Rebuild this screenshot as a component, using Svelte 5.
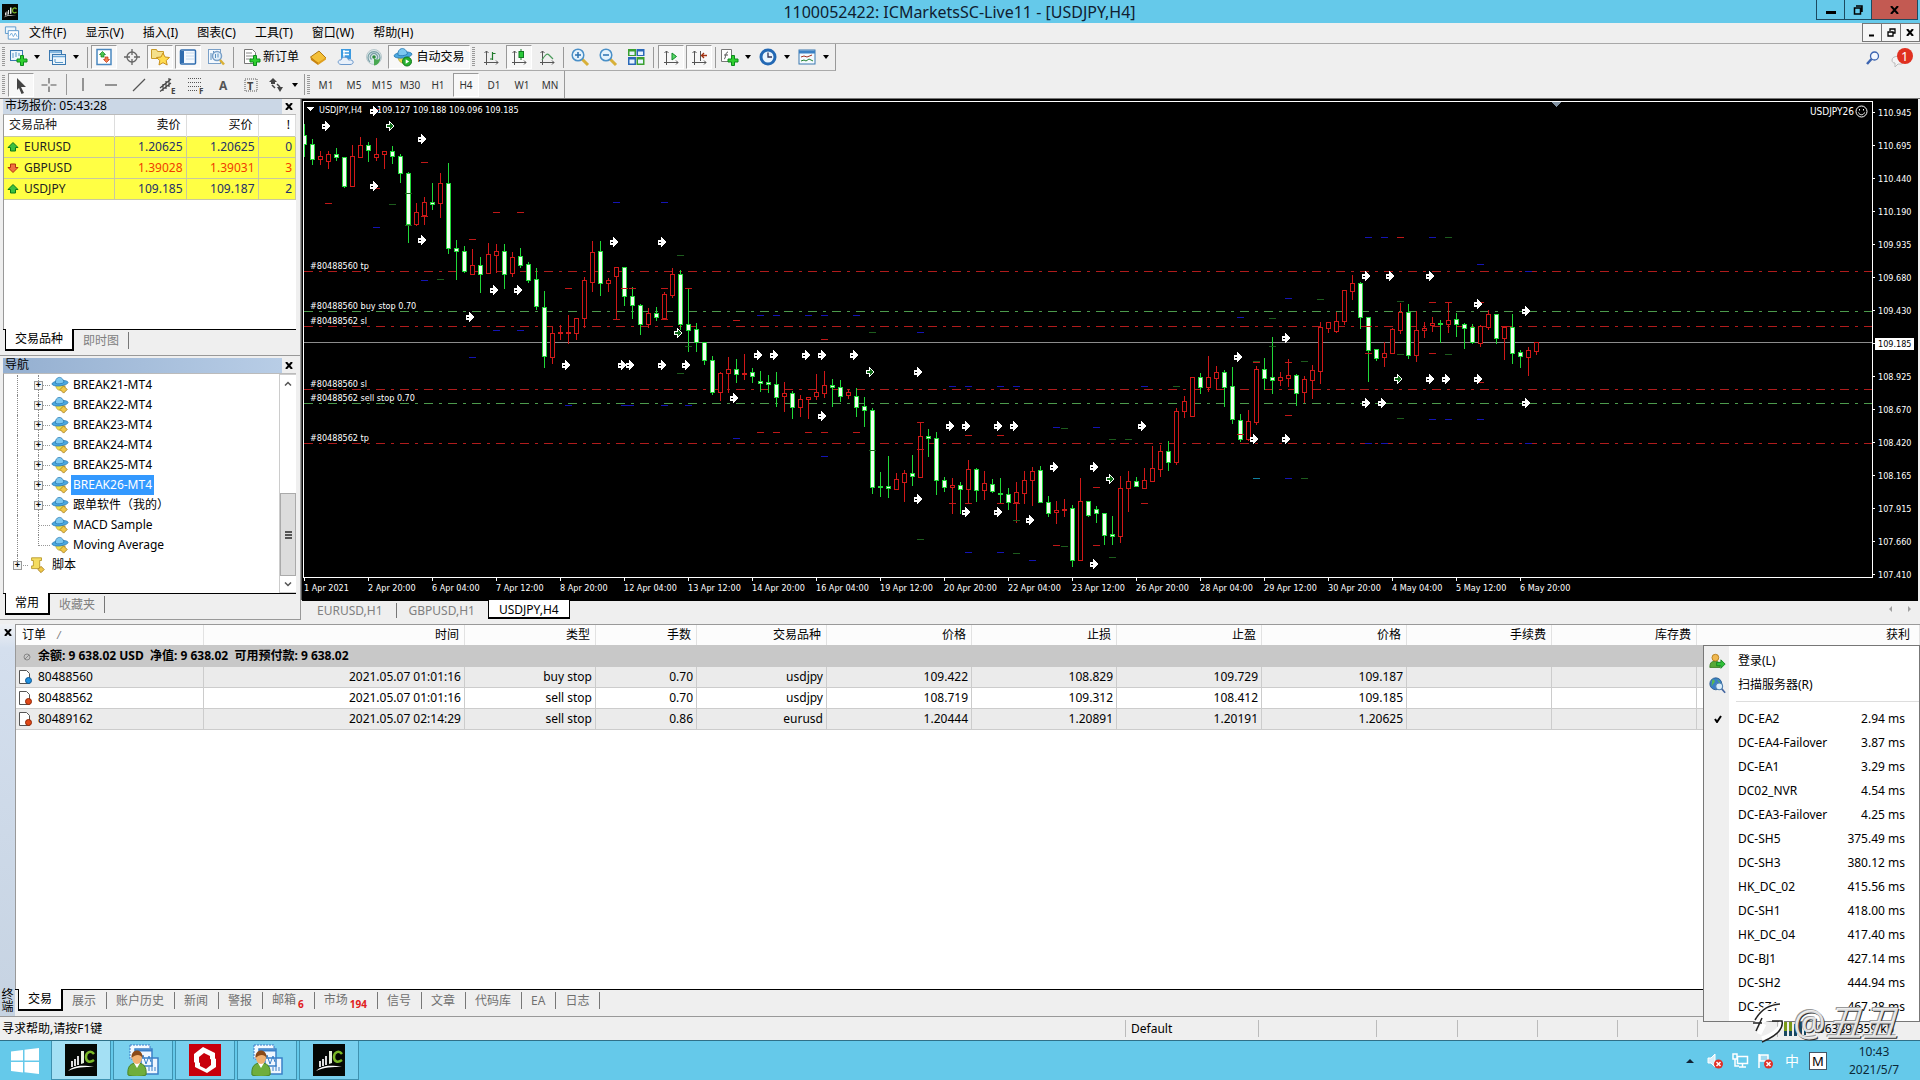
<script>
  // candle: kind, high, body top, body bottom, low (chart canvas units)
  const candleData = `g124,135,144,156 g139,144,159,164 r151,156,159,164 r151,154,161,168 g148,154,157,160 g157,157,186,187 r145,156,186,186 r137,145,157,157 g142,145,150,161 r138,154,157,160
r151,151,154,168 g146,151,156,163 g154,156,173,182 g172,173,224,242 r203,212,224,225 r197,202,215,224 g183,202,204,209 r173,183,203,217 g163,183,248,253 g240,248,251,279
g246,251,271,272 r249,265,274,274 g257,265,274,292 r243,254,273,273 r244,251,255,272 g244,251,274,288 r252,257,273,276 g248,256,265,267 g262,264,280,282 g268,279,306,309
g291,307,356,367 r327,333,357,363 r325,332,333,339 r315,332,333,343 r318,318,333,339 r277,280,318,327 r241,252,282,291 g241,251,283,295 r278,280,283,291 r267,267,276,319
g267,267,296,305 g287,296,305,318 g304,305,324,334 r308,313,324,327 g307,313,317,320 r292,294,318,319 r268,274,295,297 g270,274,324,329 g288,324,330,351 g323,329,342,351
g342,342,360,364 g356,360,392,394 r372,373,392,400 r357,369,373,392 g359,369,374,382 r354,373,374,379 g368,372,376,382 g371,381,383,391 g375,382,384,392 g372,384,397,406
r382,393,396,411 g391,393,407,418 r395,399,407,416 r397,397,399,418 r374,392,396,399 r371,385,393,397 g379,385,387,406 g380,387,396,401 r389,392,395,398 g388,396,407,416
g397,406,410,426 g408,410,487,493 g472,486,487,496 g456,486,488,497 r473,479,489,489 r470,473,482,501 g455,473,476,485 r422,436,477,477 g429,436,438,456 g432,438,480,494
g477,480,487,491 r478,485,487,513 g482,485,489,513 r460,469,489,503 g468,469,490,501 r471,483,490,499 g479,484,491,492 g478,493,494,503 g488,494,502,509 r482,492,502,522
r471,480,493,503 r467,471,480,505 g466,470,502,502 g496,502,513,516 r501,510,512,523 r499,509,510,516 g505,508,560,566 r478,501,560,560 g501,501,515,516 g506,509,513,522
g513,513,535,544 g516,534,536,544 r476,488,536,542 r471,481,488,511 g477,481,486,486 r468,480,488,488 r446,468,481,481 r445,451,469,476 g441,451,462,470 r408,411,462,464
r396,401,411,417 r377,377,416,416 g373,377,387,393 r356,377,387,391 r366,372,378,389 g370,372,387,406 g367,386,419,423 g414,420,439,441 r410,421,439,440 r366,369,422,424
g358,369,378,389 g337,377,380,393 r372,377,380,385 r359,375,378,386 g374,375,393,405 r376,379,392,402 r365,370,380,398 r322,327,371,383 r322,322,328,332 r312,321,331,332
r290,290,321,324 r275,283,291,299 g282,283,317,328 g317,317,350,381 g349,349,358,360 r342,353,357,366 r328,329,353,353 r303,312,330,333 g304,312,355,358 r311,330,355,361
r322,328,330,337 r317,323,325,331 g320,323,324,342 r302,320,324,332 g313,319,324,336 g323,324,328,348 g324,327,342,343 r325,326,343,346 r310,314,327,329 g314,314,338,343
r327,327,338,359 g314,327,353,363 g350,352,356,367 r347,350,357,375 r342,342,351,354`;
  const candles = candleData.trim().split(/\s+/).map((s, i) => {
    const [h, t, b, l] = s.slice(1).split(',').map(Number);
    return { up: s[0] === 'g', x: 304 + i * 8, h, t, b: Math.max(b, t + 1), l };
  });

  const pts = (s) => s.trim().split(' ').map((p) => p.split(',').map(Number));
  const whiteMarks = pts('326,126 374,111 422,139 374,186 422,240 614,242 662,242 494,290 518,290 470,317 566,365 622,365 630,365 662,365 686,365 734,398 758,355 774,355 806,355 822,355 854,355 918,372 822,416 918,499 950,426 966,426 998,426 1014,426 966,512 998,512 1030,520 1054,467 1094,467 1094,564 1142,426 1238,357 1286,338 1254,439 1286,439 1366,276 1390,276 1430,276 1478,304 1526,311 1430,379 1446,379 1478,379 1366,403 1382,403 1526,403');
  const greenMarks = pts('390,126 678,333 870,372 1110,479 1398,379');
  const ticks = [
    { c: '#c01818', p: pts('376,109 424,162 328,203 496,212 520,212 472,239 568,288 624,288 632,288 664,288 688,288 376,188 616,319 664,319 424,216 736,320 824,339 760,432 776,432 808,432 824,432 856,432 920,422 920,449 968,435 1000,435 952,503 968,503 1000,503 1016,503 1056,545 1096,545 1096,487 1144,503 1256,362 1288,362 1240,434 1288,415 1432,302 1448,302 1480,302 1368,353 1432,353 1480,382 1400,237 1368,326 1504,326') },
    { c: '#1414b4', p: pts('376,227 424,280 616,202 664,202 496,330 520,330 472,357 568,405 624,405 630,405 664,405 688,405 760,315 776,315 808,315 824,315 856,315 920,332 736,438 824,456 952,386 968,386 1000,386 1016,386 1056,427 1096,427 968,552 1000,552 1032,560 1144,386 1240,317 1288,298 1288,478 1368,237 1384,237 1432,237 1480,264 1528,271 1432,419 1448,419 1480,419 1368,443 1384,443 1528,443') },
    { c: '#1d5c1d', p: pts('392,204 440,279 680,255 680,373 408,193 408,225 688,346 872,332 872,450 920,539 1064,428 1112,439 1016,520 1016,553 1064,546 1112,557 1128,439 1176,386 1272,318 1320,299 1272,346 1256,361 1304,361 1304,478 1400,301 1400,354 1448,354 1400,418 1448,237') },
    { c: '#1080a0', p: pts('1256,478') }
  ];
  const orderLines = [
    { y: 271, c: '#b01c1c', t: '#80488560 tp' },
    { y: 311, c: '#4c9a4c', t: '#80488560 buy stop 0.70' },
    { y: 326, c: '#b01c1c', t: '#80488562 sl' },
    { y: 389, c: '#b01c1c', t: '#80488560 sl' },
    { y: 403, c: '#4c9a4c', t: '#80488562 sell stop 0.70' },
    { y: 443, c: '#b01c1c', t: '#80488562 tp' }
  ];
  const prices = ['110.945', '110.695', '110.440', '110.190', '109.935', '109.680', '109.430', '109.185', '108.925', '108.670', '108.420', '108.165', '107.915', '107.660', '107.410'];
  const times = ['1 Apr 2021', '2 Apr 20:00', '6 Apr 04:00', '7 Apr 12:00', '8 Apr 20:00', '12 Apr 04:00', '13 Apr 12:00', '14 Apr 20:00', '16 Apr 04:00', '19 Apr 12:00', '20 Apr 20:00', '22 Apr 04:00', '23 Apr 12:00', '26 Apr 20:00', '28 Apr 04:00', '29 Apr 12:00', '30 Apr 20:00', '4 May 04:00', '5 May 12:00', '6 May 20:00'];

  const menus = ['文件(F)', '显示(V)', '插入(I)', '图表(C)', '工具(T)', '窗口(W)', '帮助(H)'];
  const frames = ['M1', 'M5', 'M15', 'M30', 'H1', 'H4', 'D1', 'W1', 'MN'];
  const quotes = [
    ['EURUSD', '1.20625', '1.20625', '0', true],
    ['GBPUSD', '1.39028', '1.39031', '3', false],
    ['USDJPY', '109.185', '109.187', '2', true]
  ];
  const experts = ['BREAK21-MT4', 'BREAK22-MT4', 'BREAK23-MT4', 'BREAK24-MT4', 'BREAK25-MT4', 'BREAK26-MT4', '跟单软件（我的）', 'MACD Sample', 'Moving Average'];
  const cols = ['时间', '类型', '手数', '交易品种', '价格', '止损', '止盈', '价格', '手续费', '库存费', '获利'];
  const orders = [
    ['80488560', '2021.05.07 01:01:16', 'buy stop', '0.70', 'usdjpy', '109.422', '108.829', '109.729', '109.187', '', '', ''],
    ['80488562', '2021.05.07 01:01:16', 'sell stop', '0.70', 'usdjpy', '108.719', '109.312', '108.412', '109.185', '', '', ''],
    ['80489162', '2021.05.07 02:14:29', 'sell stop', '0.86', 'eurusd', '1.20444', '1.20891', '1.20191', '1.20625', '', '', '']
  ];
  const termTabs = [['展示'], ['账户历史'], ['新闻'], ['警报'], ['邮箱', '6'], ['市场', '194'], ['信号'], ['文章'], ['代码库'], ['EA'], ['日志']];
  const servers = [['DC-EA2', '2.94'], ['DC-EA4-Failover', '3.87'], ['DC-EA1', '3.29'], ['DC02_NVR', '4.54'], ['DC-EA3-Failover', '4.25'], ['DC-SH5', '375.49'], ['DC-SH3', '380.12'], ['HK_DC_02', '415.56'], ['DC-SH1', '418.00'], ['HK_DC_04', '417.40'], ['DC-BJ1', '427.14'], ['DC-SH2', '444.94'], ['DC-SZ1', '467.28']];

  const plus = '<path d="M12.5 8.5h3v3.500h3.500v3h-3.500v3.500h-3v-3.500h-3.500v-3h3.500z" fill="#2fd02f" stroke="#0c8a1c"/>';
  const axes = '<path d="M5.500 18V4M3.500 6l2-2 2 2M3 15.500h14M15 13.500l2 2-2 2" fill="none" stroke="#555"/>';
  const hat = '<path d="M5 9c0 9 9 9 11 2z" fill="#e8dc50" stroke="#a8912a" stroke-width=".6"/><g transform="rotate(-6 10 8)"><ellipse cx="10" cy="8" rx="9" ry="3" fill="#4aa8e0" stroke="#2878b0" stroke-width=".8"/><path d="M5 7.500c0-8 9-8 9.500 0-2 1.500-7.500 1.500-9.500 0z" fill="#7cc8f0" stroke="#2878b0" stroke-width=".8"/></g>';
  const person = '<path d="M1 31c-1-9 3-12 9-12s10 3 9 12c-5 2-13 2-18 0z" fill="#6fae3c" stroke="#4a8424"/><path d="M7 19l3 5 3-5z" fill="#fff"/><ellipse cx="10" cy="14" rx="5" ry="6" fill="#f0b070"/><path d="M4.500 14c-1-10 12-10 11 0-2-4-7-4-11 0z" fill="#8a4a18"/>';
  const icLogo = '<rect width="32" height="32" fill="#050805"/><path d="M6 17h2v6H6zM9 15h2v7H9zM12 12h2v9h-2z" fill="#ddd"/><path d="M16 7h3v12l-3 1z" fill="#e8f0e0"/><path d="M29 10c-3-4-8-2-8 3s4 6 8 3" fill="none" stroke="#7ab828" stroke-width="2.500"/><path d="M3 27c6-6 15-6 26-4-10 0-18 0-26 4z" fill="#fff"/>';
  const I = {
    newchart: '<rect x="2.500" y="3.500" width="12" height="10" fill="#eef6fc" stroke="#3a78b0"/><path d="M5 11V6M8 10V5M11 9V6" stroke="#5a98c8"/>' + plus,
    profiles: '<rect x="2.500" y="3.500" width="12" height="10" fill="#dcecf8" stroke="#3a78b0"/><rect x="5.500" y="7.500" width="13" height="10" fill="#eef6fc" stroke="#3a78b0"/><path d="M3 5h11M6 9.500h12" stroke="#6aa6d8" stroke-width="1.500"/><path d="M8 15.500h8M8 12v3" stroke="#5a98c8"/>',
    market: '<rect x="3" y="2.500" width="14" height="15" fill="#fff" stroke="#4a88c0" stroke-width="1.500"/><path d="M8.500 4.500l3 3H10v2.500H7V7.500H5.500z" fill="#4cc850" stroke="#108018" stroke-width=".7"/><path d="M12.500 15.500l-3-3H11V10h3v2.500h1.500z" fill="#f08050" stroke="#c03010" stroke-width=".7"/>',
    cross: '<circle cx="10" cy="10" r="5" fill="none" stroke="#666" stroke-width="1.300"/><path d="M10 2v6M10 12v6M2 10h6M12 10h6" stroke="#666" stroke-width="1.300"/>',
    nav: '<path d="M1.500 2.500h5l1 2h6v7h-12z" fill="#f4e08a" stroke="#c89a28"/><path d="M13 6l2 4 4.500.5-3.300 3 1 4.500-4.200-2.300L9 18l.8-4.500-3.300-3 4.500-.5z" fill="#ffdc50" stroke="#c8901c"/>',
    term: '<rect x="2.500" y="3" width="15" height="14" rx="1" fill="#f4f9fe" stroke="#2f6cae" stroke-width="1.500"/><path d="M4.500 4v12" stroke="#2f6cae" stroke-width="3"/><path d="M8 6h8M8 9h8M8 12h8" stroke="#c8dcee"/>',
    tester: '<rect x="2.500" y="2.500" width="12" height="14" fill="#f4f9fe" stroke="#7aa0c8"/><path d="M5 13V6M7.500 10V4" stroke="#5a90c0"/><circle cx="11" cy="9" r="4.500" fill="#e4f0fa" stroke="#7aa0c8" stroke-width="1.500"/><path d="M9.500 7v4M12 6.500v4" stroke="#5a90c0"/><path d="M14 13l4 4.500" stroke="#d8b038" stroke-width="2.500"/>',
    order: '<path d="M3.500 2.500h8l3 3v11h-11z" fill="#fff" stroke="#777"/><path d="M5 6h6M5 9h7M5 12h5" stroke="#888"/>' + plus,
    gold: '<path d="M2.500 10L11 4l7 7-8 6z" fill="#f4c038" stroke="#b07810"/><path d="M2.500 10l.5 3 7 5v-2.500z" fill="#c88410"/><path d="M10 15.500l8-5v2L10 18z" fill="#e0a020"/>',
    cloud: '<path d="M5 2h10v10H5z" fill="#3c9ae0"/><path d="M7 4.500h6M7 7.500h6M8 3v8" stroke="#fff" stroke-width="1.300"/><path d="M5 17.500c-4-.5-3.500-5 0-4.500 1-4 7-3.500 7.500 0 6-1 6 4.500 1.500 4.500z" fill="#e8f0fa" stroke="#6a98cc"/>',
    signal: '<circle cx="10" cy="10" r="7.500" fill="#dce8e8" stroke="#b8c8cc"/><path d="M6 15a6 6 0 1 1 8 0M7.500 12.500a3.500 3.500 0 1 1 5 0" fill="none" stroke="#7aa0a8" stroke-width="1.300"/><circle cx="10" cy="10" r="1.800" fill="#2a8a3a"/><path d="M10 18.500V11c2 2 5 2 6 0 0 4-2 7-6 7.500z" fill="#48a850"/>',
    auto: hat + '<circle cx="14" cy="14.500" r="4.500" fill="#28b030" stroke="#107818"/><path d="M12.700 12.200l3.500 2.300-3.500 2.300z" fill="#fff"/>',
    bars: axes + '<path d="M11.500 5v8M11.500 12h-2.500M11.500 6.500h3" stroke="#1f7a2a" stroke-width="1.200" fill="none"/>',
    candle: axes + '<path d="M12 2v11" stroke="#107a20"/><rect x="10" y="4.500" width="4.500" height="6" fill="#28c838" stroke="#107a20"/>',
    line: axes + '<path d="M5 13c3-5 5-7 7-5s3 3 4 4" fill="none" stroke="#4a9a5a" stroke-width="1.200"/>',
    zin: '<path d="M12 12l6 6" stroke="#d8b038" stroke-width="3"/><circle cx="8" cy="8" r="5.800" fill="#e4f2fc" stroke="#4a90c8" stroke-width="1.500"/><path d="M5 8h6M8 5v6" stroke="#2a70b0" stroke-width="1.500"/>',
    zout: '<path d="M12 12l6 6" stroke="#d8b038" stroke-width="3"/><circle cx="8" cy="8" r="5.800" fill="#e4f2fc" stroke="#4a90c8" stroke-width="1.500"/><path d="M5 8h6" stroke="#2a70b0" stroke-width="1.500"/>',
    tiles: '<path d="M2 2h8v7H2zM10.500 10h8v8h-8z" fill="#3aa030"/><path d="M10.500 2h8v7h-8zM2 10h8v8H2z" fill="#2a68b8"/><path d="M3.500 4.500h5V8h-5zM12 4.500h5V8h-5zM3.500 12.500h5v4h-5zM12 12.500h5v4h-5z" fill="#e8f4ff"/>',
    scroll: axes + '<path d="M11 6l4.500 3.500-4.500 3.500z" fill="#58d868" stroke="#108a28"/>',
    shift: axes + '<path d="M11.500 4v10" stroke="#555"/><path d="M18 8.500h-5M15 6l-2.500 2.500L15 11" fill="none" stroke="#a03010" stroke-width="1.300"/>',
    indic: '<path d="M2.500 2.500h10v12h-10z" fill="#fff" stroke="#777"/><path d="M5 12c2 0 1-7 4-7M5 8h4" fill="none" stroke="#555"/>' + plus,
    clock: '<circle cx="10" cy="10" r="7" fill="#e8f4fe" stroke="#2268b4" stroke-width="3"/><path d="M10 5.500V10h4" fill="none" stroke="#335" stroke-width="1.300"/>',
    tmpl: '<rect x="2" y="3" width="16" height="14" fill="#f4faff" stroke="#3a78b0"/><path d="M2 5h16" stroke="#3a80c4" stroke-width="3"/><path d="M4 10l3-1 3 1 5-2" fill="none" stroke="#a03020"/><path d="M4 14l3-1 2 1 3-2 4 2" fill="none" stroke="#208030"/>',
    cursor: '<path d="M6 3l9 9h-5l3 6-2.500 1L8 13l-2 2z" fill="#444"/>',
    hair: '<path d="M10 3v5.500M10 11.500V17M2.500 10h6M11.500 10h6" stroke="#555" stroke-width="1.200"/>',
    vl: '<path d="M10 3v13" stroke="#555" stroke-width="1.200"/>',
    hl: '<path d="M4 10h12" stroke="#555" stroke-width="1.200"/>',
    dl: '<path d="M4 16L16 4" stroke="#555" stroke-width="1.200"/>',
    chan: '<path d="M3 13L14 4M3 16.500L14 8M6 16V9M9 14V6M12 12V3" stroke="#444" stroke-width="1.200"/><text x="14" y="19" font-size="8" font-weight="bold" fill="#444">E</text>',
    fib: '<path d="M3 3.500h14M3 7.500h14M3 11.500h14M3 15.500h9" stroke="#555" stroke-dasharray="1 1"/><text x="14" y="19" font-size="8" font-weight="bold" fill="#444">F</text>',
    txt: '<text x="6" y="15" font-size="12" font-weight="bold" fill="#555">A</text>',
    lbl: '<rect x="4" y="4" width="12" height="12" fill="none" stroke="#555" stroke-dasharray="1 1"/><text x="6" y="15" font-size="11" font-weight="bold" fill="#444">T</text>',
    shapes: '<path d="M3 7l4-4 4 4zM5 7h4v2H5zM11 12h6l-3 5z" fill="#444"/><path d="M6 10l3 3M11 9l3 3" stroke="#444" stroke-width="1.500"/>',
    docs: '<path d="M1.500 1.500h11v7h-11z" fill="#eef6fc" stroke="#5a98cc"/><path d="M4.500 5.500h11v9h-11z" fill="#fff" stroke="#5a98cc"/><path d="M6 11l2-3 2 4 2-4 2 4" fill="none" stroke="#7ab0dc"/>',
    expert: hat + '<path d="M10 15l4-4 4 4-4 4z" fill="#f0c848" stroke="#a88020"/>',
    script: '<path d="M4 2h11v3h-2v9H4v-3h2V5H4z" fill="#f4dc60" stroke="#b8982a"/><path d="M11 15l3.500-3.500L18 15l-3.500 3.500z" fill="#f0c848" stroke="#a88020"/>',
    login: '<path d="M1 17c0-7 3-7 6-7s6 0 6 7z" fill="#58a838" stroke="#387a20"/><circle cx="7.500" cy="5.500" r="4" fill="#f0b850" stroke="#b07818"/><path d="M9 11h5V8l5 5-5 5v-3H9z" fill="#30c038" stroke="#108020"/>',
    scan: '<circle cx="8" cy="8" r="7" fill="#3a80c8" stroke="#28588c"/><path d="M4 3c4 0 3 4 1 5s0 4-2 2M9 2c2 2 5 3 4 6" fill="#58b850"/><circle cx="12" cy="11" r="4" fill="#d8ecfa" stroke="#5080b0" stroke-width="1.300"/><path d="M15 14l4 4.500" stroke="#4868a0" stroke-width="2"/>',
    ic: icLogo,
    remote: '<path d="M3 1h20v14H3z" fill="#f4faff" stroke="#3a78c8" stroke-dasharray="2 1"/><path d="M8 5h17v17H8zM14 14h17v16H14z" fill="#eef6ff" stroke="#3a80c8" stroke-width="1.500"/><path d="M8 6.500h17" stroke="#3a80c8" stroke-width="2"/><path d="M14 16l2-5 3 9 3-8 2 6" fill="none" stroke="#3a80c8"/><path d="M22 27v-4M25 27v-6M28 27v-4" stroke="#3a80c8"/>' + person,
    red: '<rect width="32" height="32" fill="#c8000c"/><path d="M14 3l12 6v8l-5-2v-3l-6-3-5 4v9l-5-4V10zM18 29L6 23v-7l5 3v3l6 3 5-4v-9l5 3v8z" fill="#fff"/>'
  };
  const row1a = [['market', 1], ['cross', 0], ['nav', 1], ['term', 1], ['tester', 0]];
  const tasks = ['ic', 'remote', 'red', 'remote', 'ic'];
</script>

{#snippet icon(name, size = 20, box = 20)}
  <svg class="ico" width={size} height={size} viewBox="0 0 {box} {box}" aria-hidden="true">{@html I[name]}</svg>
{/snippet}
{#snippet tool(name, on = 0)}
  <button class="tb" class:on={on} aria-label={name}>{@render icon(name)}</button>
{/snippet}
{#snippet drop(name)}
  <button class="tb wide" aria-label={name}>{@render icon(name)}<i class="caret"></i></button>
{/snippet}
{#snippet closeX()}
  <svg width="8" height="7" viewBox="0 0 8 7"><path d="M1 0l6 7M7 0L1 7" stroke="#000" stroke-width="2" /></svg>
{/snippet}

<div class="app">
  <header class="title">
    <svg class="applogo" width="16" height="16" viewBox="0 0 32 32">{@html icLogo}</svg>
    <h1>1100052422: ICMarketsSC-Live11 - [USDJPY,H4]</h1>
    <div class="winbtns">
      <button class="w1" aria-label="最小化"><svg width="10" height="16"><path d="M0 10.500h10" stroke="#000" stroke-width="3" /></svg></button>
      <button class="w2" aria-label="还原"><svg width="10" height="10"><path d="M3 1h6v6M1.500 3h6v6h-6z" fill="none" stroke="#000" stroke-width="1.500" /></svg></button>
      <button class="w3" aria-label="关闭"><svg width="9" height="8"><path d="M1 0l7 8M8 0L1 8" stroke="#000" stroke-width="2" /></svg></button>
    </div>
  </header>

  <nav class="menubar">
    <svg class="ico" width="16" height="16" viewBox="0 0 17 16">{@html I.docs}</svg>
    {#each menus as m}<button class="menu">{m}</button>{/each}
    <div class="mdi">
      <button aria-label="最小化子窗口"><svg width="8" height="8"><path d="M1 6.500h5" stroke="#000" stroke-width="2" /></svg></button>
      <button aria-label="还原子窗口"><svg width="9" height="9"><path d="M3 3V1h5v4H6M1 4h5v4H1z" fill="none" stroke="#000" stroke-width="1.300" /></svg></button>
      <button aria-label="关闭子窗口">{@render closeX()}</button>
    </div>
  </nav>

  <div class="tools">
    <div class="bar">
      <i class="grip"></i>
      {@render drop('newchart')}{@render drop('profiles')}
      <i class="sep s4"></i>
      {#each row1a as [n, on]}{@render tool(n, on)}{/each}
      <i class="sep s6"></i>
      <button class="tb order">{@render icon('order')}新订单</button>
      {@render tool('gold')}{@render tool('cloud')}{@render tool('signal')}
      <button class="tb auto on">{@render icon('auto')}自动交易</button>
      <i class="grip"></i>
      {@render tool('bars')}{@render tool('candle', 1)}{@render tool('line')}
      <i class="sep s4"></i>
      {@render tool('zin')}{@render tool('zout')}{@render tool('tiles')}
      <i class="sep s8"></i>
      {@render tool('scroll', 1)}{@render tool('shift', 1)}
      <i class="sep s4"></i>
      {@render drop('indic')}{@render drop('clock')}{@render drop('tmpl')}
    </div>
    <div class="bar low">
      <i class="grip"></i>
      {@render tool('cursor', 1)}{@render tool('hair')}
      <i class="sep s6"></i>
      {#each ['vl', 'hl', 'dl', 'chan', 'fib', 'txt', 'lbl'] as n}{@render tool(n)}{/each}
      {@render drop('shapes')}
      <i class="sep s1"></i>
      <i class="grip"></i>
      {#each frames as f}<button class="tb tf" class:on={f === 'H4'}>{f}</button>{/each}
    </div>
    <div class="notice">
      <svg width="14" height="14" viewBox="0 0 14 14"><circle cx="8.500" cy="5" r="4" fill="#f4f8ff" stroke="#3c64b0" stroke-width="1.300" /><path d="M5.500 8L1 13" stroke="#3c64b0" stroke-width="2.500" /></svg>
      <svg width="24" height="22" viewBox="0 0 24 22"><path d="M2 13c0-5 12-5 12 0s-5 4-6 4l-3 3v-4c-2 0-3-1-3-3z" fill="#f4f4f4" stroke="#bbb" /><circle cx="15" cy="9" r="8" fill="#e03020" /><text x="11" y="14" font-size="13" fill="#fff">1</text></svg>
    </div>
  </div>

  <main class="work">
    <aside class="side">
      <section class="panel market">
        <header class="cap"><h2>市场报价: 05:43:28</h2><button aria-label="关闭市场报价">{@render closeX()}</button></header>
        <div class="box">
          <table class="quotes">
            <thead><tr><th class="q1">交易品种</th><th class="q2">卖价</th><th class="q2">买价</th><th>!</th></tr></thead>
            <tbody>
              {#each quotes as [s, b, a, sp, up]}
                <tr class:down={!up}>
                  <td><svg width="12" height="10" viewBox="0 0 12 10"><path d={up ? 'M6 .5L11 5.500H8.500v3.500h-5V5.500H1z' : 'M6 9.500L11 4.500H8.500V1h-5v3.500H1z'} fill={up ? '#3cc040' : '#f07040'} stroke={up ? '#0c7818' : '#b03010'} /></svg>{s}</td>
                  <td>{b}</td><td>{a}</td><td>{sp}</td>
                </tr>
              {/each}
            </tbody>
          </table>
        </div>
        <div class="tabs"><button class="tab cur">交易品种</button><button class="tab">即时图</button></div>
      </section>
      <section class="panel navigator">
        <header class="cap blue"><h2>导航</h2><button aria-label="关闭导航">{@render closeX()}</button></header>
        <div class="box tree">
          <ul>
            {#each experts as e, i}
              <li class:last={i === experts.length - 1}>
                <i class="rail"></i><i class="branch">{#if i < 7}<b>+</b>{/if}</i>
                {@render icon('expert', 18)}<span class:sel={i === 5}>{e}</span>
              </li>
            {/each}
            <li class="root"><i class="branch"><b>+</b></i>{@render icon('script', 18)}<span>脚本</span></li>
          </ul>
          <div class="scroll">
            <button aria-label="向上滚动"><svg width="8" height="5"><path d="M1 4.500l3-3 3 3" fill="none" stroke="#555" stroke-width="1.500" /></svg></button>
            <i class="thumb"></i>
            <button aria-label="向下滚动"><svg width="8" height="5"><path d="M1 .5l3 3 3-3" fill="none" stroke="#555" stroke-width="1.500" /></svg></button>
          </div>
        </div>
        <div class="tabs"><button class="tab cur">常用</button><button class="tab">收藏夹</button></div>
      </section>
    </aside>

    <section class="chartcol">
      <div class="chart">
        <div class="plot">
          <svg width="100%" height="100%" shape-rendering="crispEdges">
            <rect x="0" y="240" width="100%" height="1" fill="#8c8c8c" />
            {#each orderLines as l}
              <line x1="0" x2="100%" y1={l.y - 101.5} y2={l.y - 101.5} stroke={l.c} stroke-dasharray="9 6 3 6" />
            {/each}
            <g transform="translate(-304 -102)">
              {#each candles as c}
                <rect x={c.x} y={c.h} width="1" height={c.l - c.h + 1} fill={c.up ? '#20d838' : '#d01818'} />
                <rect x={c.x - 2} y={c.t} width="5" height={c.b - c.t + 1} fill={c.up ? '#20d838' : '#d01818'} />
                {#if c.b - c.t > 1}
                  <rect x={c.x - 1} y={c.t + 1} width="3" height={c.b - c.t - 1} fill={c.up ? '#f0fff0' : '#000'} />
                {/if}
              {/each}
              {#each ticks as k}
                {#each k.p as [x, y]}<rect x={x - 3} {y} width="7" height="1" fill={k.c} />{/each}
              {/each}
              {#each whiteMarks as [x, y]}
                <path transform="translate({x} {y})" d="M-4-2h3v-3l5 5-5 5V3h-3z" fill="#fff" />
                <rect x={x - 3} {y} width="2" height="1" fill="#000" />
              {/each}
              {#each greenMarks as [x, y]}
                <path transform="translate({x} {y})" d="M-3.500-1.500h3v-3l4.500 4.500-4.500 4.500v-3h-3z" fill="#106818" stroke="#fff" />
              {/each}
              {#each orderLines as l}<text x="310" y={l.y - 2}>{l.t}</text>{/each}
              <path d="M307 107h7l-3.500 4z" fill="#fff" />
              <text x="319" y="113">USDJPY,H4</text>
              <text x="377" y="113">109.127 109.188 109.096 109.185</text>
              <path d="M1551 102h11l-5.500 5z" fill="#8090a0" />
            </g>
          </svg>
          <div class="ea">USDJPY26<svg width="13" height="13" viewBox="0 0 13 13"><circle cx="6.500" cy="6.500" r="5.500" fill="none" stroke="#fff" /><path d="M3.500 7.500c1 3 5 3 6 0M4.500 4v1.500M8.500 4v1.500" fill="none" stroke="#fff" /></svg></div>
        </div>
        <ol class="prices">{#each prices as p}<li><span class:now={p === '109.185'}>{p}</span></li>{/each}</ol>
        <ol class="times">{#each times as t}<li>{t}</li>{/each}</ol>
      </div>
      <div class="ctabs">
        <button>EURUSD,H1</button><button class="nb">GBPUSD,H1</button><button class="cur">USDJPY,H4</button>
        <svg width="26" height="8"><path d="M4 1L1 4l3 3zM20 1l3 3-3 3z" fill="#a0a0a0" /></svg>
      </div>
    </section>
  </main>

  <section class="terminal">
    <div class="strip"><button aria-label="关闭终端">{@render closeX()}</button><span>终端</span></div>
    <div class="tbody">
      <div class="grid">
        <table class="orders">
          <colgroup><col class="c1" /><col class="c2" /><col class="c3" /><col class="c4" /><col class="c5" /><col class="c6" /><col class="c6" /><col class="c6" /><col class="c6" /><col class="c6" /><col class="c6" /><col /></colgroup>
          <thead><tr><th>订单<em>/</em></th>{#each cols as c}<th>{c}</th>{/each}</tr></thead>
          <tbody>
            <tr class="bal"><td colspan="12"><svg width="8" height="8" viewBox="0 0 8 8"><circle cx="4" cy="4" r="3" fill="none" stroke="#888" /><path d="M2 6l4-4" stroke="#888" /></svg>余额: 9 638.02 USD&nbsp; 净值: 9 638.02&nbsp; 可用预付款: 9 638.02</td></tr>
            {#each orders as o, i}
              <tr>
                {#each o as v, j}
                  <td>{#if j === 0}<svg width="15" height="16" viewBox="0 0 15 16"><path d="M1.500 1.500h7l3 3v10h-10z" fill="#fff" stroke="#555" /><circle cx="10.500" cy="11.500" r="3" fill={i ? '#e04818' : '#2090e0'} stroke={i ? '#902808' : '#105890'} /></svg>{/if}{v}</td>
                {/each}
              </tr>
            {/each}
          </tbody>
        </table>
      </div>
      <div class="ttabs">
        <button class="cur">交易</button>
        {#each termTabs as [t, n]}<button>{t}{#if n}<sub>{n}</sub>{/if}</button>{/each}
      </div>
    </div>
  </section>

  <footer class="status">
    <span class="help">寻求帮助,请按F1键</span><span class="f1">Default</span><span class="f2"></span><span class="f3"></span><span class="f4"></span><span class="f4"></span><span class="f4"></span><span class="f4"></span>
    <span class="net"><svg width="24" height="14" viewBox="0 0 24 14"><path d="M1 0h3v9H1zM6 0h3v9H6z" fill="#7a9a18" /><path d="M1 9h3v5H1zM6 9h3v5H6zM11 2h3v12h-3zM16 0h3v14h-3zM21 1h2v12h-2z" fill="#184860" /></svg>406389/359 kb</span>
  </footer>

  <footer class="taskbar">
    <button class="start" aria-label="开始"><svg width="28" height="26" viewBox="0 0 28 26"><path d="M0 3.500L12 2v10.500H0zM13.500 1.800L28 0v12.500H13.500zM0 14h12v10.500L0 23zM13.500 14H28v12l-14.500-1.800z" fill="#fff" /></svg></button>
    {#each tasks as t, i}<button class="task" class:act={i === 0} aria-label={t}>{@render icon(t, 32, 32)}</button>{/each}
    <div class="tray">
      <svg class="up" width="8" height="5"><path d="M0 5l4-4 4 4z" fill="#123" /></svg>
      <svg width="17" height="16" viewBox="0 0 17 16"><path d="M1 5h3l4-4v13l-4-4H1z" fill="#d8eef8" stroke="#fff" /><circle cx="11.500" cy="11" r="4.500" fill="#e03028" /><path d="M9.500 9l4 4M13.500 9l-4 4" stroke="#fff" stroke-width="1.500" /></svg>
      <svg width="17" height="16" viewBox="0 0 17 16"><path d="M5.500 3.500h10v7h-10zM10.500 10.500v3M7 14h7M1 1h4v5H1zM3 6v7h4" fill="none" stroke="#fff" stroke-width="1.500" /></svg>
      <svg width="17" height="16" viewBox="0 0 17 16"><path d="M2 1v14M3 2h8v6H3z" fill="#a0d8ee" stroke="#fff" stroke-width="1.500" /><circle cx="11.500" cy="11" r="4.500" fill="#e03028" /><path d="M9.500 9l4 4M13.500 9l-4 4" stroke="#fff" stroke-width="1.500" /></svg>
      <span class="ime">中</span><span class="m">M</span>
      <time>10:43<br />2021/5/7</time>
    </div>
  </footer>

  <div class="popup" role="menu">
    <button class="cmd" role="menuitem"><i>{@render icon('login', 17)}</i>登录(L)</button>
    <button class="cmd" role="menuitem"><i>{@render icon('scan', 17)}</i>扫描服务器(R)</button>
    <hr />
    {#each servers as [n, ms], i}
      <button class="cmd" role="menuitem"><i>{#if i === 0}<svg class="check" width="8" height="8"><path d="M1 4l2 3 4-6" fill="none" stroke="#000" stroke-width="2" /></svg>{/if}</i>{n}<span>{ms} ms</span></button>
    {/each}
  </div>

  <div class="mark">
    <svg width="36" height="40" viewBox="0 0 36 40"><path d="M8 15C13 4 22 2 34 2M4 22C16 14 26 14 31 16c3 8-6 16-19 20M14 21l-5 10" fill="none" stroke="#fff" stroke-width="5" /><path d="M5 17C12 5 20 2 30 1M3 20h9M12 15l-6 13M22 18h10c2 9-8 16-20 21" fill="none" stroke="#222" stroke-width="1.500" /></svg>
    <span>@<em>丑丑</em></span>
  </div>
</div>

<style>
  :global(body) { background: #efefef; }
  .app, .app * { box-sizing: border-box; }
  .app { position: relative; height: 100vh; display: flex; flex-direction: column; overflow: hidden; background: #efefef; color: #000; font: 12px/16px "Noto Sans", "Noto Sans CJK SC", sans-serif; }
  button { font: inherit; color: inherit; background: none; border: 0; padding: 0; margin: 0; }
  h1, h2, ul, ol { margin: 0; padding: 0; font: inherit; list-style: none; }
  svg { flex: none; }
  i { font-style: normal; }

  .title { display: flex; align-items: center; height: 23px; flex: none; background: #65c9ea; }
  .title h1 { flex: 1; text-align: center; font-size: 16px; line-height: 22px; color: #102030; padding-left: 84px; }
  .applogo { margin-left: 2px; }
  .winbtns { display: flex; align-self: flex-start; margin-right: 2px; }
  .winbtns button { height: 20px; border: 1px solid #1c4a60; border-top: 0; margin-left: -1px; display: grid; place-items: center; }
  .w1 { width: 29px; } .w2 { width: 28px; } .w3 { width: 47px; }
  .winbtns .w3 { background: #c35a52; }

  .menubar { display: flex; align-items: center; height: 21px; flex: none; padding-left: 4px; border-bottom: 1px solid #a8a8a8; }
  .menu { padding: 0 9px; height: 20px; line-height: 18px; margin-right: 1px; }
  .mdi { margin-left: auto; display: flex; align-self: flex-start; }
  .mdi button { width: 20px; height: 19px; margin-left: -1px; border: 1px solid #777; background: #f6f6f6; display: grid; place-items: center; }

  .tools { position: relative; flex: none; height: 55px; border-bottom: 1px solid #777; }
  .bar { display: flex; align-items: center; height: 27px; width: max-content; border-right: 1px solid #999; border-bottom: 1px solid #aaa; }
  .bar.low { border-bottom: 0; }
  .grip { width: 7px; height: 20px; flex: none; background: repeating-linear-gradient(#999 0 1px, transparent 1px 2px) no-repeat 2px 0 / 3px 100%; }
  .tb { width: 28px; height: 24px; display: flex; align-items: center; justify-content: center; flex: none; }
  .tb.on { background: #f8f8f8; border: 1px solid #fff; border-top-color: #999; border-left-color: #999; }
  .tb:not(.auto).on { width: 26px; margin: 0 1px; }
  .tb.wide { width: 39px; justify-content: flex-start; padding-left: 1px; gap: 4px; }
  .tb.order { width: 68px; gap: 2px; } .tb.auto { width: 82px; gap: 3px; }
  .caret { border: 3px solid transparent; border-top: 4px solid #000; border-bottom: 0; margin-left: 2px; }
  .sep { height: 21px; flex: none; background: linear-gradient(#999, #999) no-repeat center / 1px 100%; }
  .s1 { width: 1px; } .s4 { width: 5px; } .s6 { width: 6px; } .s8 { width: 7px; }
  .tf { font-size: 10px; color: #333; }
  .notice { position: absolute; right: 6px; top: 3px; display: flex; align-items: center; gap: 10px; }

  .work { display: flex; flex: 524 1 0; min-height: 0; }
  .side { width: 301px; flex: none; display: flex; flex-direction: column; border-right: 1px solid #999; }
  .panel { display: flex; flex-direction: column; min-height: 0; padding: 0 4px 0 3px; border-bottom: 1px solid #999; }
  .market { flex: 259 1 0; } .navigator { flex: 264 1 0; padding-top: 2px; }
  .cap { display: flex; height: 15px; flex: none; }
  .cap h2 { flex: 1; line-height: 14px; padding-left: 2px; background: #cbd7e6; font-size: 12px; }
  .cap.blue h2 { background: linear-gradient(90deg, #94afd0, #b8cde6); }
  .cap button { width: 14px; display: grid; place-items: center; }
  .box { flex: 1; min-height: 0; background: #fff; border-left: 1px solid #999; border-top: 1px solid #bbb; overflow: hidden; }
  .quotes { width: 100%; border-collapse: collapse; table-layout: fixed; }
  .quotes th { height: 21px; padding: 0 5px; font-weight: 400; text-align: right; border-right: 1px solid #ddd; }
  .quotes th:first-child, .quotes td:first-child { text-align: left; color: #222; }
  .quotes td { height: 21px; padding: 0 3px; background: #ff4; text-align: right; border: 1px solid #c8c8a0; color: #22306a; border-left: 0; }
  .quotes tr.down td + td { color: #f03c00; }
  .quotes td svg { margin: 0 5px 0 0; vertical-align: -1px; }
  .q1 { width: 110px; } .q2 { width: 72px; }
  .tabs { display: flex; height: 26px; flex: none; border-top: 1px solid #000; padding-left: 2px; align-items: flex-start; }
  .tab { height: 17px; margin-top: 2px; padding: 0 9px; color: #808080; border-right: 1px solid #777; }
  .tab.cur { height: 22px; margin-top: -1px; background: #fff; color: #000; border: 1px solid #000; border-top: 0; border-right-width: 2px; border-bottom-width: 2px; }
  .tree { display: flex; }
  .tree ul { flex: 1; padding-top: 1px; }
  .tree li { height: 20px; display: flex; align-items: center; padding-left: 13px; }
  .rail { width: 1px; height: 20px; border-left: 1px dotted #888; }
  .branch { position: relative; width: 33px; height: 20px; margin-left: 0; background: repeating-linear-gradient(90deg, #999 0 1px, transparent 1px 2px) no-repeat 21px 10px / 11px 1px; }
  .branch::before { content: ""; position: absolute; left: 20px; top: 0; height: 20px; border-left: 1px dotted #888; }
  .last .branch::before { height: 11px; }
  .branch b { position: absolute; left: 16px; top: 6px; width: 9px; height: 9px; border: 1px solid #999; background: #f4f4f4; font: bold 9px/7px "Liberation Sans", sans-serif; text-align: center; }
  .tree li span { padding: 0 2px; margin-left: 2px; line-height: 20px; }
  .tree li .sel { background: #39f; color: #fff; }
  .tree .root { padding-left: 0; }
  .root .branch { width: 24px; background-position: 13px 10px; }
  .root .branch::before { left: 13px; height: 10px; }
  .root .branch b { left: 9px; }
  .tree .root span { margin-left: 4px; }
  .scroll { width: 17px; display: flex; flex-direction: column; border: 1px solid #ccc; border-right: 0; }
  .scroll button { height: 16px; display: grid; place-items: center; }
  .thumb { height: 83px; margin-top: auto; background: linear-gradient(#555 0 2px, transparent 2px 3px, #555 3px 5px, transparent 5px 6px, #555 6px 8px) no-repeat center / 7px 8px #dcdcdc; border: 1px solid #aaa; }

  .chartcol { flex: 1; min-width: 0; display: flex; flex-direction: column; padding: 0 2px 0 0; }
  .chart { flex: 1; min-height: 0; display: grid; grid-template: 1fr 22px / 1fr 45px; background: #000; color: #fff; border-left: 1px solid #555; padding: 2px 0 0 1px; overflow: hidden; font: 9px/12px "DejaVu Sans Condensed", "DejaVu Sans", sans-serif; }
  .plot { position: relative; border: 1px solid #fff; overflow: hidden; min-width: 0; min-height: 0; }
  .plot > svg { display: block; position: absolute; inset: 0; }
  .plot text { fill: #fff; }
  .ea { position: absolute; right: 4px; top: 3px; display: flex; align-items: center; gap: 1px; font-size: 10px; }
  .prices { min-height: 0; margin-top: -5px; }
  .prices li { height: 33px; display: flex; align-items: center; }
  .prices li::before { content: ""; width: 2px; height: 1px; background: #fff; }
  .prices span { padding: 0 3px; }
  .prices .now { background: #fff; color: #000; padding: 0 3px; margin-right: -2px; }
  .times { display: flex; overflow: hidden; padding-left: 1px; grid-column: 1 / 3; }
  .times li { width: 64px; flex: none; white-space: nowrap; padding-top: 4px; background: linear-gradient(#fff, #fff) no-repeat 0 0 / 1px 3px; }
  .ctabs { display: flex; align-items: flex-start; height: 20px; flex: none; border-top: 1px solid #000; margin-left: 1px; padding-left: 3px; color: #808080; }
  .ctabs button { height: 15px; line-height: 16px; margin-top: 2px; padding: 0 13px 0 12px; border-right: 1px solid #777; }
  .ctabs .nb { border-right: 0; }
  .ctabs .cur { height: 19px; margin-top: -1px; padding: 0 10px; line-height: 19px; background: #fff; color: #000; border: 1px solid #000; border-top: 0; border-bottom-width: 2px; }
  .ctabs svg { margin: 4px 4px 0 auto; }

  .terminal { display: flex; flex: 394 1 0; min-height: 0; padding-top: 4px; border-bottom: 1px solid #999; }
  .strip { width: 15px; flex: none; display: flex; flex-direction: column; align-items: center; justify-content: space-between; background: linear-gradient(#f0f2f5, #d4dfee 24px, #c6d3e2); }
  .strip span { font-size: 12px; line-height: 12px; width: 12px; margin-bottom: 3px; }
  .strip button { height: 12px; }
  .tbody { flex: 1; min-width: 0; display: flex; flex-direction: column; }
  .grid { flex: 1; min-height: 0; background: #fff; border-top: 1px solid #999; border-left: 1px solid #999; overflow: hidden; }
  .orders { width: 100%; table-layout: fixed; border-collapse: separate; border-spacing: 0; }
  .orders th, .orders td { height: 21px; padding: 0 3px; text-align: right; font-weight: 400; white-space: nowrap; border-right: 1px solid #ccc; line-height: 16px; }
  .orders th { height: 20px; background: #fcfcfc; padding-right: 5px; border-color: #e2e2e2; }
  .orders th:last-child { padding-right: 9px; }
  .orders td { border-bottom: 1px solid #ccc; }
  .orders th:first-child, .orders td:first-child { text-align: left; padding-left: 6px; }
  .orders td:first-child { padding-left: 1px; }
  .orders em { margin-left: 11px; color: #777; font-size: 10px; }
  .orders td svg { vertical-align: -4px; margin: 0 5px 0 1px; }
  .orders tr:nth-child(even) td { background: #ebebeb; }
  .orders .bal td { height: 22px; background: #c8c8c8; font-weight: 700; border: 0; padding-left: 7px; }
  .orders .bal svg { vertical-align: -1px; margin: 0 7px 0 0; }
  .c1 { width: 188px; } .c2 { width: 261px; } .c3 { width: 131px; } .c4 { width: 101px; } .c5 { width: 130px; } .c6 { width: 145px; }
  .ttabs { display: flex; align-items: flex-start; flex: none; height: 27px; border-top: 1px solid #000; padding-left: 3px; color: #707070; }
  .ttabs button { height: 17px; margin-top: 2px; padding: 0 10px 0 9px; border-right: 1px solid #777; white-space: nowrap; }
  .ttabs .cur { height: 22px; margin-top: -1px; padding: 0 9px; background: #fff; color: #000; border: 1px solid #000; border-top: 0; border-right-width: 2px; border-bottom-width: 2px; }
  .ttabs sub { font-size: 10px; line-height: 9px; font-weight: 700; color: #e02020; vertical-align: -4px; margin-left: 2px; }

  .status { display: flex; align-items: center; height: 23px; flex: none; padding-left: 2px; }
  .status span { height: 17px; line-height: 17px; border-left: 1px solid #bbb; padding-left: 5px; white-space: nowrap; }
  .status .help { flex: 1; border: 0; padding: 0; }
  .f1 { width: 133px; } .f2 { width: 118px; } .f3 { width: 81px; } .f4 { width: 80px; }
  .net { width: 143px; display: flex; align-items: center; gap: 4px; }

  .taskbar { display: flex; height: 40px; flex: none; background: #65c9ea; border-top: 1px solid #2f7088; }
  .start { width: 50px; display: grid; place-items: center; }
  .task { width: 60px; margin-left: 2px; display: grid; place-items: center; border: 1px solid #3f92b0; border-top: 0; background: #79d0ee; }
  .start + .task { margin-left: 1px; }
  .task.act { background: #a4e0f4; }
  .tray { margin-left: auto; display: flex; align-items: center; gap: 8px; color: #0c2838; padding-right: 15px; }
  .tray .up { margin-right: 5px; }
  .ime { width: 20px; text-align: center; color: #fff; font-size: 14px; }
  .m { width: 16px; height: 16px; background: #fff; color: #000; font-size: 13px; line-height: 16px; text-align: center; outline: 1px solid #456; margin-right: 9px; }
  .tray time { text-align: center; line-height: 18px; width: 62px; }

  .popup { position: absolute; right: 0; bottom: 58px; width: 217px; padding: 3px 0 2px; border: 1px solid #777; background: linear-gradient(90deg, #efefef 25px, #fff 25px); display: flex; flex-direction: column; }
  .cmd { display: flex; align-items: center; height: 24px; padding-right: 14px; text-align: left; }
  .cmd i { width: 34px; display: flex; padding-left: 5px; }
  .cmd .check { margin-left: 5px; }
  .cmd span { margin-left: auto; }
  .popup hr { width: auto; margin: 4px 0 5px 32px; border: 0; border-top: 1px solid #ddd; }

  .mark { position: absolute; right: 22px; bottom: 35px; display: flex; align-items: center; gap: 8px; color: rgba(255, 255, 255, .85); font-size: 36px; line-height: 44px; pointer-events: none; }
  .mark span { text-shadow: 1px 1px 0 #333, -1px -1px 0 #999; }
</style>
